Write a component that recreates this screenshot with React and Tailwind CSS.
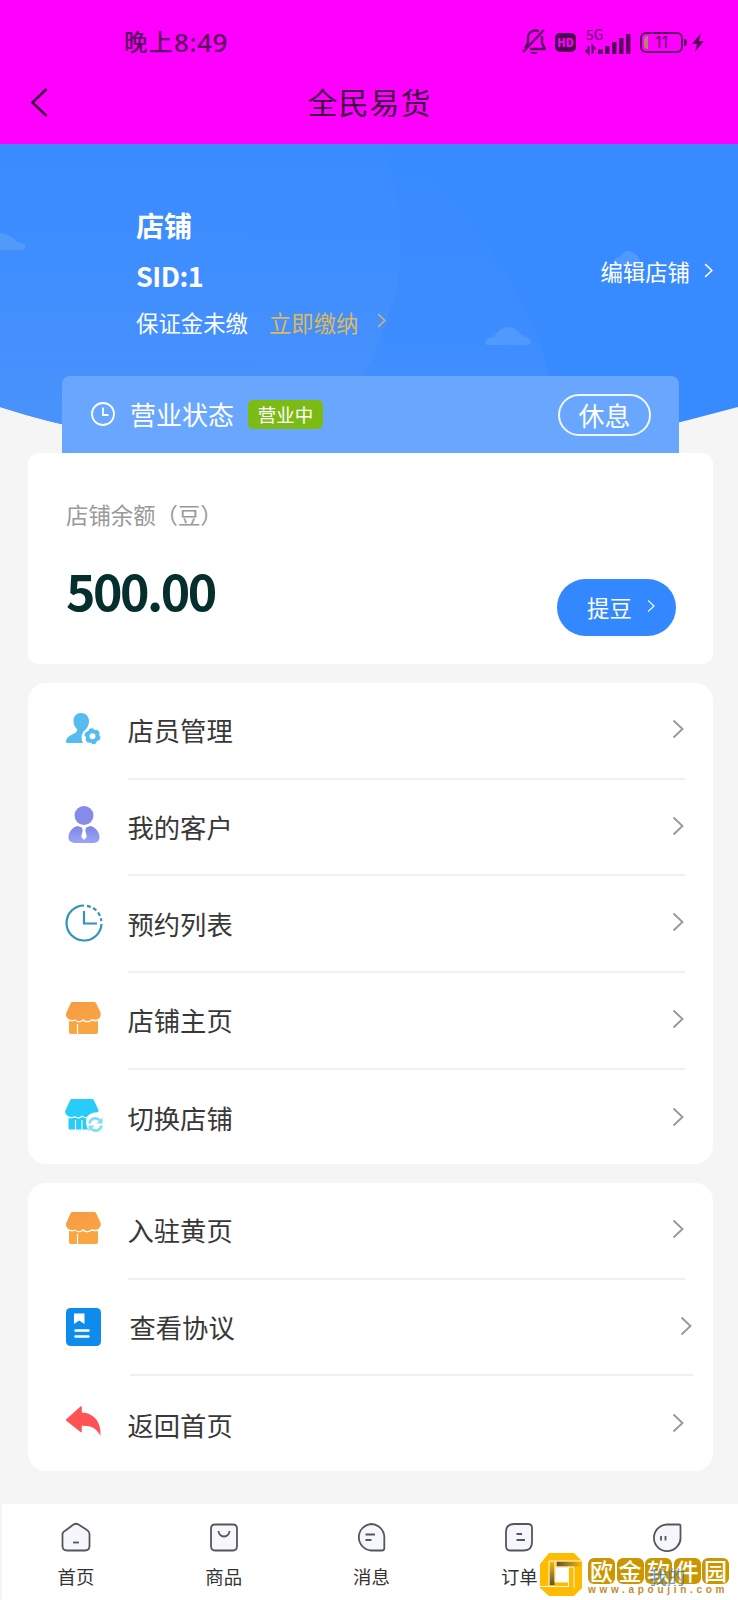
const cuentas = [
  { icon: StaffIcon, label: '店员管理' },
  { icon: CustomerIcon, label: '我的客户' },
  { icon: BookingIcon, label: '预约列表' },
  { icon: ShopIcon, label: '店铺主页' },
  { icon: SwitchShopIcon, label: '切换店铺' },
]

const extras = [
  { icon: ShopIcon, label: '入驻黄页' },
  { icon: AgreementIcon, label: '查看协议', wide: true },
  { icon: BackHomeIcon, label: '返回首页' },
]

function Chevron({ className, width = 2 }) {
  return (
    <svg viewBox="0 0 12 20" className={className} fill="none" stroke="currentColor" strokeWidth={width}>
      <path d="M1.5 1.5 10.5 10 1.5 18.5" />
    </svg>
  )
}

function StaffIcon() {
  return (
    <svg viewBox="0 2 40 40" className="w-10 h-10" fill="#56bcf0">
      <path d="M17 5C12.500 5 9.500 8.500 9.500 13C9.500 16.500 10.500 18.500 12.500 20.500C14 22.500 12.500 24.500 9 26C5 28 2.500 29.500 2 33C1.800 34.500 2.500 35 4 35H19C16.500 30 17.500 24 22 21.200C24 18.500 25 16 25 13C25 8.500 21.500 5 17 5Z" />
      <circle cx="28.500" cy="28.200" r="5" fill="none" stroke="#56bcf0" strokeWidth="4" />
      <circle cx="28.500" cy="28.200" r="7" fill="none" stroke="#56bcf0" strokeWidth="2" strokeDasharray="4.200 3.130" />
    </svg>
  )
}

function CustomerIcon() {
  return (
    <svg viewBox="-1 2.500 40 40" className="w-10 h-10 overflow-visible">
      <defs>
        <linearGradient id="customer" x1="0" y1="0" x2="0" y2="1">
          <stop offset="0" stopColor="#7f86e6" />
          <stop offset="1" stopColor="#9ba4f4" />
        </linearGradient>
      </defs>
      <circle cx="19" cy="11" r="9.500" fill="#858be8" />
      <path
        d="M13 21.500C7 22.500 3.500 28 3.500 33C3.500 37 7 38.500 11 38.500H27.500C31.500 38.500 34.500 37 34.500 33C34.500 28 31 22.500 25 21.500C21.500 23.500 16.500 23.500 13 21.500Z"
        fill="url(#customer)"
      />
      <path d="M16.800 22.500H21.200L20.300 26L21.800 32.500L19 35.500L16.200 32.500L17.700 26Z" fill="#fff" />
    </svg>
  )
}

function BookingIcon() {
  return (
    <svg viewBox="0 0 40 40" className="w-10 h-10" fill="none" stroke="#3094ba" strokeWidth="2.200">
      <path d="M20 2.500A17.500 17.500 0 1 0 37.500 21" />
      <path d="M23 2.800A17.500 17.500 0 0 1 37.400 18" strokeDasharray="4 2.500" />
      <path d="M20 8V20.500H33" />
    </svg>
  )
}

function ShopIcon() {
  return (
    <svg viewBox="0 2 40 40" className="w-10 h-10">
      <defs>
        <linearGradient id="shop" x1="0" y1="0" x2="1" y2="1">
          <stop offset="0" stopColor="#f59a45" />
          <stop offset="1" stopColor="#fba544" />
        </linearGradient>
      </defs>
      <path
        d="M8.500 4H30C31 4 31.500 4.300 32 5L36.500 14.500C37.500 18 35.500 21.500 32 21.800C30 22 28.500 21.500 27.500 21C25 24 21.500 23.500 19 21C16.500 24 13 23.500 11 21.500C6 23.500 1.500 20 2 15.500L6.500 5.500C7 4.500 7.500 4 8.500 4Z"
        fill="url(#shop)"
      />
      <path
        d="M5 23C7.500 23.500 9.500 23.500 11.500 22.800C13.500 24.800 16.500 24.800 19 22.800C21.500 24.800 25 24.800 27.500 22.800C30 23.500 32 23.500 34 23V34C34 35.300 33.300 36 32 36H7C5.700 36 5 35.300 5 34Z"
        fill="#faa544"
      />
      <path d="M13.500 26V36" stroke="#fff" strokeWidth="1.200" />
    </svg>
  )
}

function SwitchShopIcon() {
  return (
    <svg viewBox="0 1 40 40" className="w-10 h-10">
      <path
        d="M8 3H28C29 3 29.500 3.500 30 4.500L34.500 14C35 15.500 34 16.500 32 16.500C27 16.500 24.500 19 23 21C20.500 21.500 19.500 20.500 18 19.500C15.500 22 12.500 21.500 11 20C7 22.500 .8 20 1.200 15L6 4.500C6.500 3.500 7 3 8 3Z"
        fill="#27cdf8"
      />
      <path
        d="M4.500 22C7 22.500 9.500 22 11 21.500C13.500 23 16 23 18 21L22.500 22.500C21.500 26 22 30 24 33.500H6C5 33.500 4.500 33 4.500 32Z"
        fill="#27cdf8"
      />
      <path d="M11.500 24V33.500M18 24V33.500" stroke="#fff" strokeWidth="1.100" />
      <g fill="none" stroke="#7fdcf3" strokeWidth="2.600">
        <path d="M25.500 27.500A6 6 0 0 1 36 24.500" />
        <path d="M37.500 29.500A6 6 0 0 1 27 32.500" />
      </g>
      <path d="M38.500 21.500V27.500H32.500ZM24.500 35.500V29.500H30.500Z" fill="#7fdcf3" />
    </svg>
  )
}

function AgreementIcon() {
  return (
    <svg viewBox="0 0 40 40" className="w-10 h-10">
      <rect x="2" y="1" width="35" height="38" rx="4.500" fill="#0d8cec" />
      <path d="M10 6.500H20.500V17L15.200 13.500L10 17Z" fill="#fff" />
      <path d="M11.500 23.500H24.500M11.500 29.500H24.500" stroke="#fff" strokeWidth="2.500" strokeLinecap="round" />
    </svg>
  )
}

function BackHomeIcon() {
  return (
    <svg viewBox="0 0 40 40" className="w-10 h-10" fill="#ff5255">
      <path d="M2 16.500L16.500 3.500C17 3 17.800 3.300 17.800 4V9.500C29 10 37.500 18 36.500 33C32.500 25 27 22.500 17.800 22.800V28.500C17.800 29.200 17 29.500 16.500 29L2 17.500Z" />
    </svg>
  )
}

const tabs = [
  {
    label: '首页',
    shape: 'M5.500 9.500 13.500 3.500Q16 2 18.500 3.500L27 9Q29.500 10.500 29.500 13V25Q29.500 29.500 25 29.500H7Q2.500 29.500 2.500 25V13Q2.500 11 5.500 9.500Z',
    marks: 'M13 21.500H19',
  },
  {
    label: '商品',
    shape: 'M7 3.500H25Q29 3.500 29 7.500V25Q29 29.500 25 29.500H7Q3 29.500 3 25V7.500Q3 3.500 7 3.500Z',
    marks: 'M10.500 10A5.500 5.500 0 0 0 21.500 10',
  },
  {
    label: '消息',
    shape: 'M16 3A13.300 13.300 0 0 0 16 29.500H27Q29.300 29.500 29.300 27V16A13.300 13.300 0 0 0 16 3Z',
    marks: 'M10.500 13.500H20M10.500 19H16.500',
  },
  {
    label: '订单',
    shape: 'M11 3H25Q29 3 29 7V21Q29 29.500 21 29.500H7Q3 29.500 3 25V11Q3 3 11 3Z',
    marks: 'M13.500 13H19M13.500 19H22',
  },
  {
    label: '我的',
    active: true,
    shape: 'M16 3.500H28Q29.500 3.500 29.500 5V16A13.300 13.300 0 1 1 16 3.500Z',
    marks: 'M10 15V19.500M14.500 15V19.500',
  },
]

function StatusBar() {
  return (
    <div className="h-[62px] pt-[22px] pl-[124px] pr-[34px] flex items-center justify-between text-[#5b0060]">
      <span className="flex items-center leading-none font-medium">
        <span className="text-[23.500px] tracking-[1.500px]">晚上</span>
        <span className="text-[26px] tracking-[0.600px] font-['Noto_Sans',sans-serif]">8:49</span>
      </span>
      <div className="flex items-center">
        <svg viewBox="0 0 24 28" className="w-6 h-7" fill="none" stroke="currentColor" strokeWidth="2.400">
          <path d="M1 24 22 2M17 3.500C12 1 6 4 6 9.500V15L3 20M20 8V15L23 21H8" />
          <path d="M8 24H16L14 26H10Z" fill="currentColor" stroke="none" />
        </svg>
        <div className="ml-[9px] w-[21px] h-[19px] rounded-[5px] bg-[#4e0052] text-[#f0f] text-[11px] leading-[19px] font-black text-center">
          HD
        </div>
        <div className="ml-[9px] w-[46px] h-7 relative">
          <span className="absolute left-px -top-px text-[14px] leading-[14px]">5G</span>
          <svg viewBox="0 0 46 28" className="w-[46px] h-7" fill="currentColor">
            <path d="M13 21.500h5v4.500h-5zM20 18h4.500v8h-4.500zM27 14h4.500v12h-4.500zM34 10h4.500v16h-4.500zM41 6h4.500v20h-4.500z" />
            <path d="M3.500 18V25.500L.5 22M7.500 25.500V18L10.500 21.500" fill="none" stroke="currentColor" strokeWidth="2" />
          </svg>
        </div>
        <div className="ml-[9px] w-[43px] h-[21px] border-2 border-current rounded-[6px] flex items-center p-[2px]">
          <span className="w-1 h-full bg-[#b08a68] rounded-l-sm" />
          <span className="flex-1 text-center text-[16px] leading-none pr-1 font-['Inter',sans-serif]">11</span>
        </div>
        <div className="ml-px w-[3px] h-[7px] bg-current rounded-r" />
        <svg viewBox="0 0 12 19" className="ml-[5px] w-3 h-[19px]" fill="currentColor">
          <path d="M9 0 0 11H5L3 19 12 8H7Z" />
        </svg>
      </div>
    </div>
  )
}

function HeroBackground() {
  return (
    <svg viewBox="0 0 738 309" className="absolute inset-0 w-full h-full">
      <defs>
        <linearGradient id="sky" x1="0" y1="0" x2="0" y2="1">
          <stop offset="0" stopColor="#398bff" />
          <stop offset="0.400" stopColor="#3f8eff" />
          <stop offset="1" stopColor="#4b93fa" />
        </linearGradient>
        <linearGradient id="hill" x1="0" y1="0" x2="0" y2="1">
          <stop offset="0" stopColor="#388aff" />
          <stop offset="0.300" stopColor="#398bff" />
          <stop offset="1" stopColor="#418eff" />
        </linearGradient>
      </defs>
      <path d="M0 0H738V263Q690 276 640 288Q369 330 98 288Q50 279 0 263Z" fill="#388aff" />
      <path d="M390 0Q470 60 525 165Q552 215 550 260H340V0Z" fill="url(#hill)" />
      <path d="M0 0H385Q410 90 395 150Q385 190 362 235L340 309Q200 305 98 288Q50 279 0 263Z" fill="url(#sky)" />
      <path d="M0 89Q12 91 17 98Q26 99 26 103Q25 106 20 106H0Z" fill="#5399fa" />
      <path d="M485 198Q487 193 494 193Q499 183 509 183Q517 184 521 191Q530 193 531 198Q531 201 526 201H488Q484 201 485 198Z" fill="#5099ff" />
      <path d="M613 122Q614 113 620 112Q626 105 632 108Q640 111 641 122Z" fill="#5099ff" />
    </svg>
  )
}

function MenuCard({ items, className }) {
  return (
    <div className={`ml-[28px] mr-[25px] bg-white rounded-[18px] overflow-hidden ${className}`}>
      {items.map(({ icon: Icon, label, wide }, index) => (
        <div key={label} className="h-[96.700px] flex pl-[35.500px]">
          <div className="w-10 flex items-center pb-[3px]">
            <Icon />
          </div>
          <div
            className={`flex-1 flex items-center justify-between ${wide ? 'ml-[26px] mr-5 pr-px' : 'ml-6 mr-7 pr-px'} ${
              index < items.length - 1 ? 'border-b-2 border-[#f0f0f0]' : ''
            }`}
          >
            <span className="text-[26.300px] leading-none text-[#383838]">{label}</span>
            <Chevron className="-mt-[3px] w-3 h-5 text-[#999]" width={1.9} />
          </div>
        </div>
      ))}
    </div>
  )
}

function TabBar() {
  return (
    <nav className="mt-[33px] ml-0.5 -mr-[3px] h-24 bg-white flex">
      {tabs.map((tab) => (
        <div key={tab.label} className="flex-1 pt-[17px] flex flex-col items-center">
          <svg viewBox="0 0 32 32" className="w-8 h-8" fill="#f6f6fd" stroke="#55555b" strokeWidth="1.800">
            <path d={tab.shape} />
            <path d={tab.marks} fill="none" />
          </svg>
          <span
            className={`mt-[13px] text-[18.400px] leading-[20px] ${tab.active ? 'relative z-10 text-[#3d78b0]/75' : 'text-[#333]'}`}
          >
            {tab.label}
          </span>
        </div>
      ))}
    </nav>
  )
}

function SiteBadge() {
  return (
    <div className="absolute left-[540px] top-[1552px] flex items-start">
      <svg viewBox="0 0 42 44" className="w-[42px] h-11">
        <defs>
          <linearGradient id="foldTop" x1="0" y1="0" x2="1" y2="0">
            <stop offset="0" stopColor="#5b5236" />
            <stop offset="1" stopColor="#f5b800" />
          </linearGradient>
          <linearGradient id="foldSide" x1="0" y1="0" x2="0" y2="1">
            <stop offset="0" stopColor="#fdbc00" />
            <stop offset="1" stopColor="#5b5236" />
          </linearGradient>
        </defs>
        <path fillRule="evenodd" d="M9 1H34L42 9V36L34 44H9L0 36V12ZM15.500 15.500V30H28V15.500Z" fill="#fdbc00" />
        <path d="M17 9.500H41V14.500H17Z" fill="url(#foldTop)" />
        <path d="M9.500 9.500H14.500V33H9.500Z" fill="url(#foldSide)" />
        <path d="M9 34V9H42M15 9V30H28M0 34.500H28M28.500 35V15H15M34 36V15H28" fill="none" stroke="#fff" strokeWidth="0.900" />
      </svg>
      <div className="ml-[6px] pt-[6px]">
        <div className="flex gap-[1.500px]">
          {['欧', '金', '软', '件', '园'].map((letra) => (
            <span
              key={letra}
              className="w-[27px] h-[26px] rounded-[6px] bg-[#cc9600] text-white text-[23px] leading-[24px] font-medium text-center"
            >
              {letra}
            </span>
          ))}
        </div>
        <div className="mt-[1px] text-[#c68a2e] text-[10px] leading-[10px] font-bold tracking-[3.700px] font-['Liberation_Sans']">
          www.apoujin.com
        </div>
      </div>
    </div>
  )
}

function App() {
  return (
    <div className="relative w-[738px] h-[1600px] overflow-hidden bg-[#f5f5f5] font-['Noto_Sans_CJK_SC',sans-serif]">
      <header className="h-36 bg-[#f0f]">
        <StatusBar />
        <div className="h-[82px] flex items-center pl-[30px] pr-[30px] text-[#3d0041]">
          <Chevron className="-mt-0.5 w-[19px] h-[33px] rotate-180" width={1.6} />
          <h1 className="-mt-[5px] flex-1 text-center text-[30px] leading-none tracking-[1px] pr-[18px]">全民易货</h1>
        </div>
      </header>

      <section className="relative h-[309px]">
        <HeroBackground />
        <div className="relative h-full flex flex-col justify-between">
          <div className="pl-[136px] pr-[25px] pt-[65px] flex items-start justify-between text-white">
            <div>
              <h2 className="text-[28px] leading-[32px] font-bold">店铺</h2>
              <p className="mt-[19px] text-[27px] leading-[32px] font-bold tracking-[-0.500px]">SID:1</p>
              <div className="mt-[17px] flex items-center text-[22.400px] leading-[26px]">
                <span>保证金未缴</span>
                <span className="ml-[21px] text-[#dcb95c]">立即缴纳</span>
                <Chevron className="ml-[18px] -mt-1 w-[9px] h-[15px] text-[#c9b678]" />
              </div>
            </div>
            <div className="mt-[49px] flex items-center text-[22.400px] leading-[26px]">
              <span>编辑店铺</span>
              <Chevron className="ml-[14px] -mt-0.5 w-[9px] h-[15px]" />
            </div>
          </div>

          <div className="ml-[62px] mr-[59px] h-[77px] rounded-t-lg bg-[#69a7ff] pl-[29px] pr-[28px] flex items-center text-white">
            <svg viewBox="0 0 24 24" className="-mt-0.5 w-6 h-6" fill="none" stroke="currentColor" strokeWidth="1.800">
              <circle cx="12" cy="12" r="11" />
              <path d="M12 5.500V13H17.500" />
            </svg>
            <span className="-mt-0.5 ml-[15px] text-[26px] leading-none">营业状态</span>
            <span className="ml-[14px] w-[75px] h-[29px] rounded-[5px] bg-[#7cbb14] text-[18.500px] leading-[28px] text-center">
              营业中
            </span>
            <button className="ml-auto w-[93px] h-[42px] rounded-full border-2 border-white/90 text-[26px] leading-none">
              休息
            </button>
          </div>
        </div>
      </section>

      <section className="ml-[28px] mr-[25px] h-[211px] bg-white rounded-[10px] pl-[38px] pr-[37px] pt-[47px]">
        <p className="text-[22.400px] leading-[28px] text-[#999]">店铺余额（豆）</p>
        <div className="flex items-start justify-between">
          <p className="mt-[31px] text-[50px] leading-[60px] font-bold tracking-[-2.500px] text-[#052f2d]">500.00</p>
          <button className="mt-[51px] w-[119px] h-[57px] rounded-full bg-[#3388ff] text-white text-[22.400px] leading-none flex items-center pl-[30px]">
            <span className="-mt-px">提豆</span>
            <Chevron className="ml-[15px] -mt-[3px] w-2 h-[14px]" width={1.8} />
          </button>
        </div>
      </section>

      <MenuCard items={cuentas} className="mt-[19px] h-[481px]" />
      <MenuCard items={extras} className="mt-[19px] h-[288px]" />

      <TabBar />
      <SiteBadge />
    </div>
  )
}

export default App
